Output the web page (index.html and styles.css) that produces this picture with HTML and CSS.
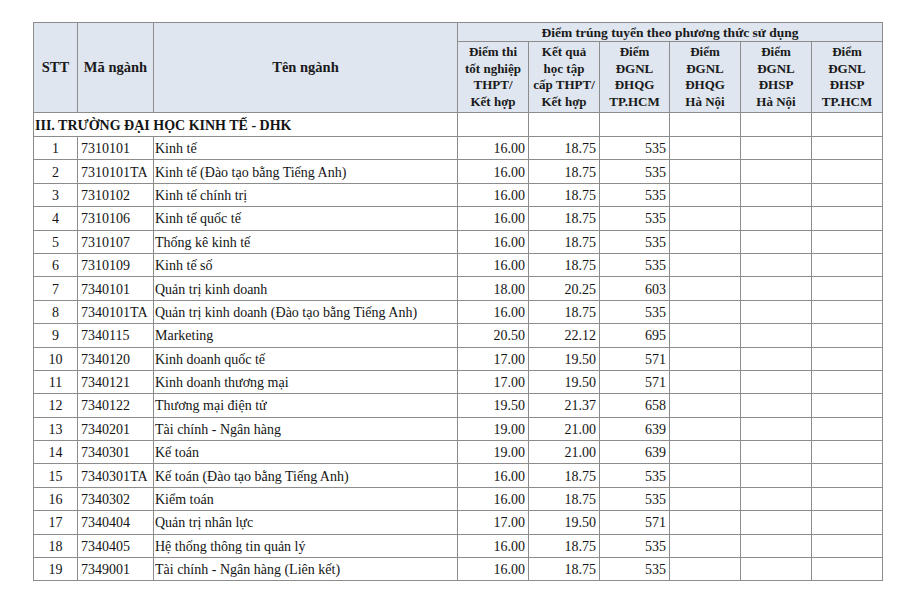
FILE: index.html
```html
<!DOCTYPE html>
<html lang="vi">
<head>
<meta charset="utf-8">
<title>Điểm trúng tuyển</title>
<link rel="stylesheet" href="styles.css">
</head>
<body>
<div class="page">
<table class="scores">
<colgroup>
<col class="c-stt"><col class="c-ma"><col class="c-ten">
<col class="c-s"><col class="c-s"><col class="c-s3"><col class="c-s"><col class="c-s"><col class="c-s">
</colgroup>
<thead>
<tr class="h1">
<th rowspan="2" class="big">STT</th>
<th rowspan="2" class="big">Mã ngành</th>
<th rowspan="2" class="big">Tên ngành</th>
<th colspan="6">Điểm trúng tuyển theo phương thức sử dụng</th>
</tr>
<tr class="h2">
<th>Điểm thi<br>tốt nghiệp<br>THPT/<br>Kết hợp</th>
<th>Kết quả<br>học tập<br>cấp THPT/<br>Kết hợp</th>
<th>Điểm<br>ĐGNL<br>ĐHQG<br>TP.HCM</th>
<th>Điểm<br>ĐGNL<br>ĐHQG<br>Hà Nội</th>
<th>Điểm<br>ĐGNL<br>ĐHSP<br>Hà Nội</th>
<th>Điểm<br>ĐGNL<br>ĐHSP<br>TP.HCM</th>
</tr>
</thead>
<tbody>
<tr class="section"><td colspan="3">III. TRƯỜNG ĐẠI HỌC KINH TẾ - DHK</td><td></td><td></td><td></td><td></td><td></td><td></td></tr>
<tr><td class="stt">1</td><td class="code">7310101</td><td class="name">Kinh tế</td><td class="num">16.00</td><td class="num">18.75</td><td class="num">535</td><td></td><td></td><td></td></tr>
<tr><td class="stt">2</td><td class="code">7310101TA</td><td class="name">Kinh tế (Đào tạo bằng Tiếng Anh)</td><td class="num">16.00</td><td class="num">18.75</td><td class="num">535</td><td></td><td></td><td></td></tr>
<tr><td class="stt">3</td><td class="code">7310102</td><td class="name">Kinh tế chính trị</td><td class="num">16.00</td><td class="num">18.75</td><td class="num">535</td><td></td><td></td><td></td></tr>
<tr><td class="stt">4</td><td class="code">7310106</td><td class="name">Kinh tế quốc tế</td><td class="num">16.00</td><td class="num">18.75</td><td class="num">535</td><td></td><td></td><td></td></tr>
<tr><td class="stt">5</td><td class="code">7310107</td><td class="name">Thống kê kinh tế</td><td class="num">16.00</td><td class="num">18.75</td><td class="num">535</td><td></td><td></td><td></td></tr>
<tr><td class="stt">6</td><td class="code">7310109</td><td class="name">Kinh tế số</td><td class="num">16.00</td><td class="num">18.75</td><td class="num">535</td><td></td><td></td><td></td></tr>
<tr><td class="stt">7</td><td class="code">7340101</td><td class="name">Quản trị kinh doanh</td><td class="num">18.00</td><td class="num">20.25</td><td class="num">603</td><td></td><td></td><td></td></tr>
<tr><td class="stt">8</td><td class="code">7340101TA</td><td class="name">Quản trị kinh doanh (Đào tạo bằng Tiếng Anh)</td><td class="num">16.00</td><td class="num">18.75</td><td class="num">535</td><td></td><td></td><td></td></tr>
<tr><td class="stt">9</td><td class="code">7340115</td><td class="name">Marketing</td><td class="num">20.50</td><td class="num">22.12</td><td class="num">695</td><td></td><td></td><td></td></tr>
<tr><td class="stt">10</td><td class="code">7340120</td><td class="name">Kinh doanh quốc tế</td><td class="num">17.00</td><td class="num">19.50</td><td class="num">571</td><td></td><td></td><td></td></tr>
<tr><td class="stt">11</td><td class="code">7340121</td><td class="name">Kinh doanh thương mại</td><td class="num">17.00</td><td class="num">19.50</td><td class="num">571</td><td></td><td></td><td></td></tr>
<tr><td class="stt">12</td><td class="code">7340122</td><td class="name">Thương mại điện tử</td><td class="num">19.50</td><td class="num">21.37</td><td class="num">658</td><td></td><td></td><td></td></tr>
<tr><td class="stt">13</td><td class="code">7340201</td><td class="name">Tài chính - Ngân hàng</td><td class="num">19.00</td><td class="num">21.00</td><td class="num">639</td><td></td><td></td><td></td></tr>
<tr><td class="stt">14</td><td class="code">7340301</td><td class="name">Kế toán</td><td class="num">19.00</td><td class="num">21.00</td><td class="num">639</td><td></td><td></td><td></td></tr>
<tr><td class="stt">15</td><td class="code">7340301TA</td><td class="name">Kế toán (Đào tạo bằng Tiếng Anh)</td><td class="num">16.00</td><td class="num">18.75</td><td class="num">535</td><td></td><td></td><td></td></tr>
<tr><td class="stt">16</td><td class="code">7340302</td><td class="name">Kiểm toán</td><td class="num">16.00</td><td class="num">18.75</td><td class="num">535</td><td></td><td></td><td></td></tr>
<tr><td class="stt">17</td><td class="code">7340404</td><td class="name">Quản trị nhân lực</td><td class="num">17.00</td><td class="num">19.50</td><td class="num">571</td><td></td><td></td><td></td></tr>
<tr><td class="stt">18</td><td class="code">7340405</td><td class="name">Hệ thống thông tin quản lý</td><td class="num">16.00</td><td class="num">18.75</td><td class="num">535</td><td></td><td></td><td></td></tr>
<tr><td class="stt">19</td><td class="code">7349001</td><td class="name">Tài chính - Ngân hàng (Liên kết)</td><td class="num">16.00</td><td class="num">18.75</td><td class="num">535</td><td></td><td></td><td></td></tr>
</tbody>
</table>
</div>
</body>
</html>
```
FILE: styles.css
```css
html, body {
  margin: 0;
  padding: 0;
  background: #ffffff;
}
.page {
  padding: 22px 0 0 33px;
  font-family: "Liberation Serif", "Times New Roman", serif;
  color: #141414;
}
.scores {
  border-collapse: collapse;
  table-layout: fixed;
  width: 850px;
  font-size: 14px;
}
.c-stt { width: 44px; }
.c-ma { width: 76px; }
.c-ten { width: 304px; }
.c-s { width: 71px; }
.c-s3 { width: 70px; }
.scores th, .scores td {
  border: 1px solid #8c8c8c;
  padding: 0;
  white-space: nowrap;
  overflow: hidden;
}
.scores thead th {
  background: #dfe6f0;
  font-weight: bold;
  text-align: center;
  vertical-align: middle;
  color: #1a1a1a;
}
.h1 th { height: 18px; font-size: 13.5px; line-height: 15px; }
.h1 th.big { font-size: 14.5px; }
.h2 th { height: 70px; font-size: 13px; line-height: 16.5px; }
.scores tbody td {
  vertical-align: middle;
  padding-top: 2px;
  line-height: 16px;
}
.section td {
  height: 21px;
  font-weight: bold;
  font-size: 14px;
  padding-left: 1px;
}
tbody tr { height: 23.4px; }
.stt { text-align: center; }
.scores tbody td.code { padding-left: 3px; }
.scores tbody td.name { padding-left: 1px; }
.scores tbody td.num { text-align: right; padding-right: 3px; }
```
